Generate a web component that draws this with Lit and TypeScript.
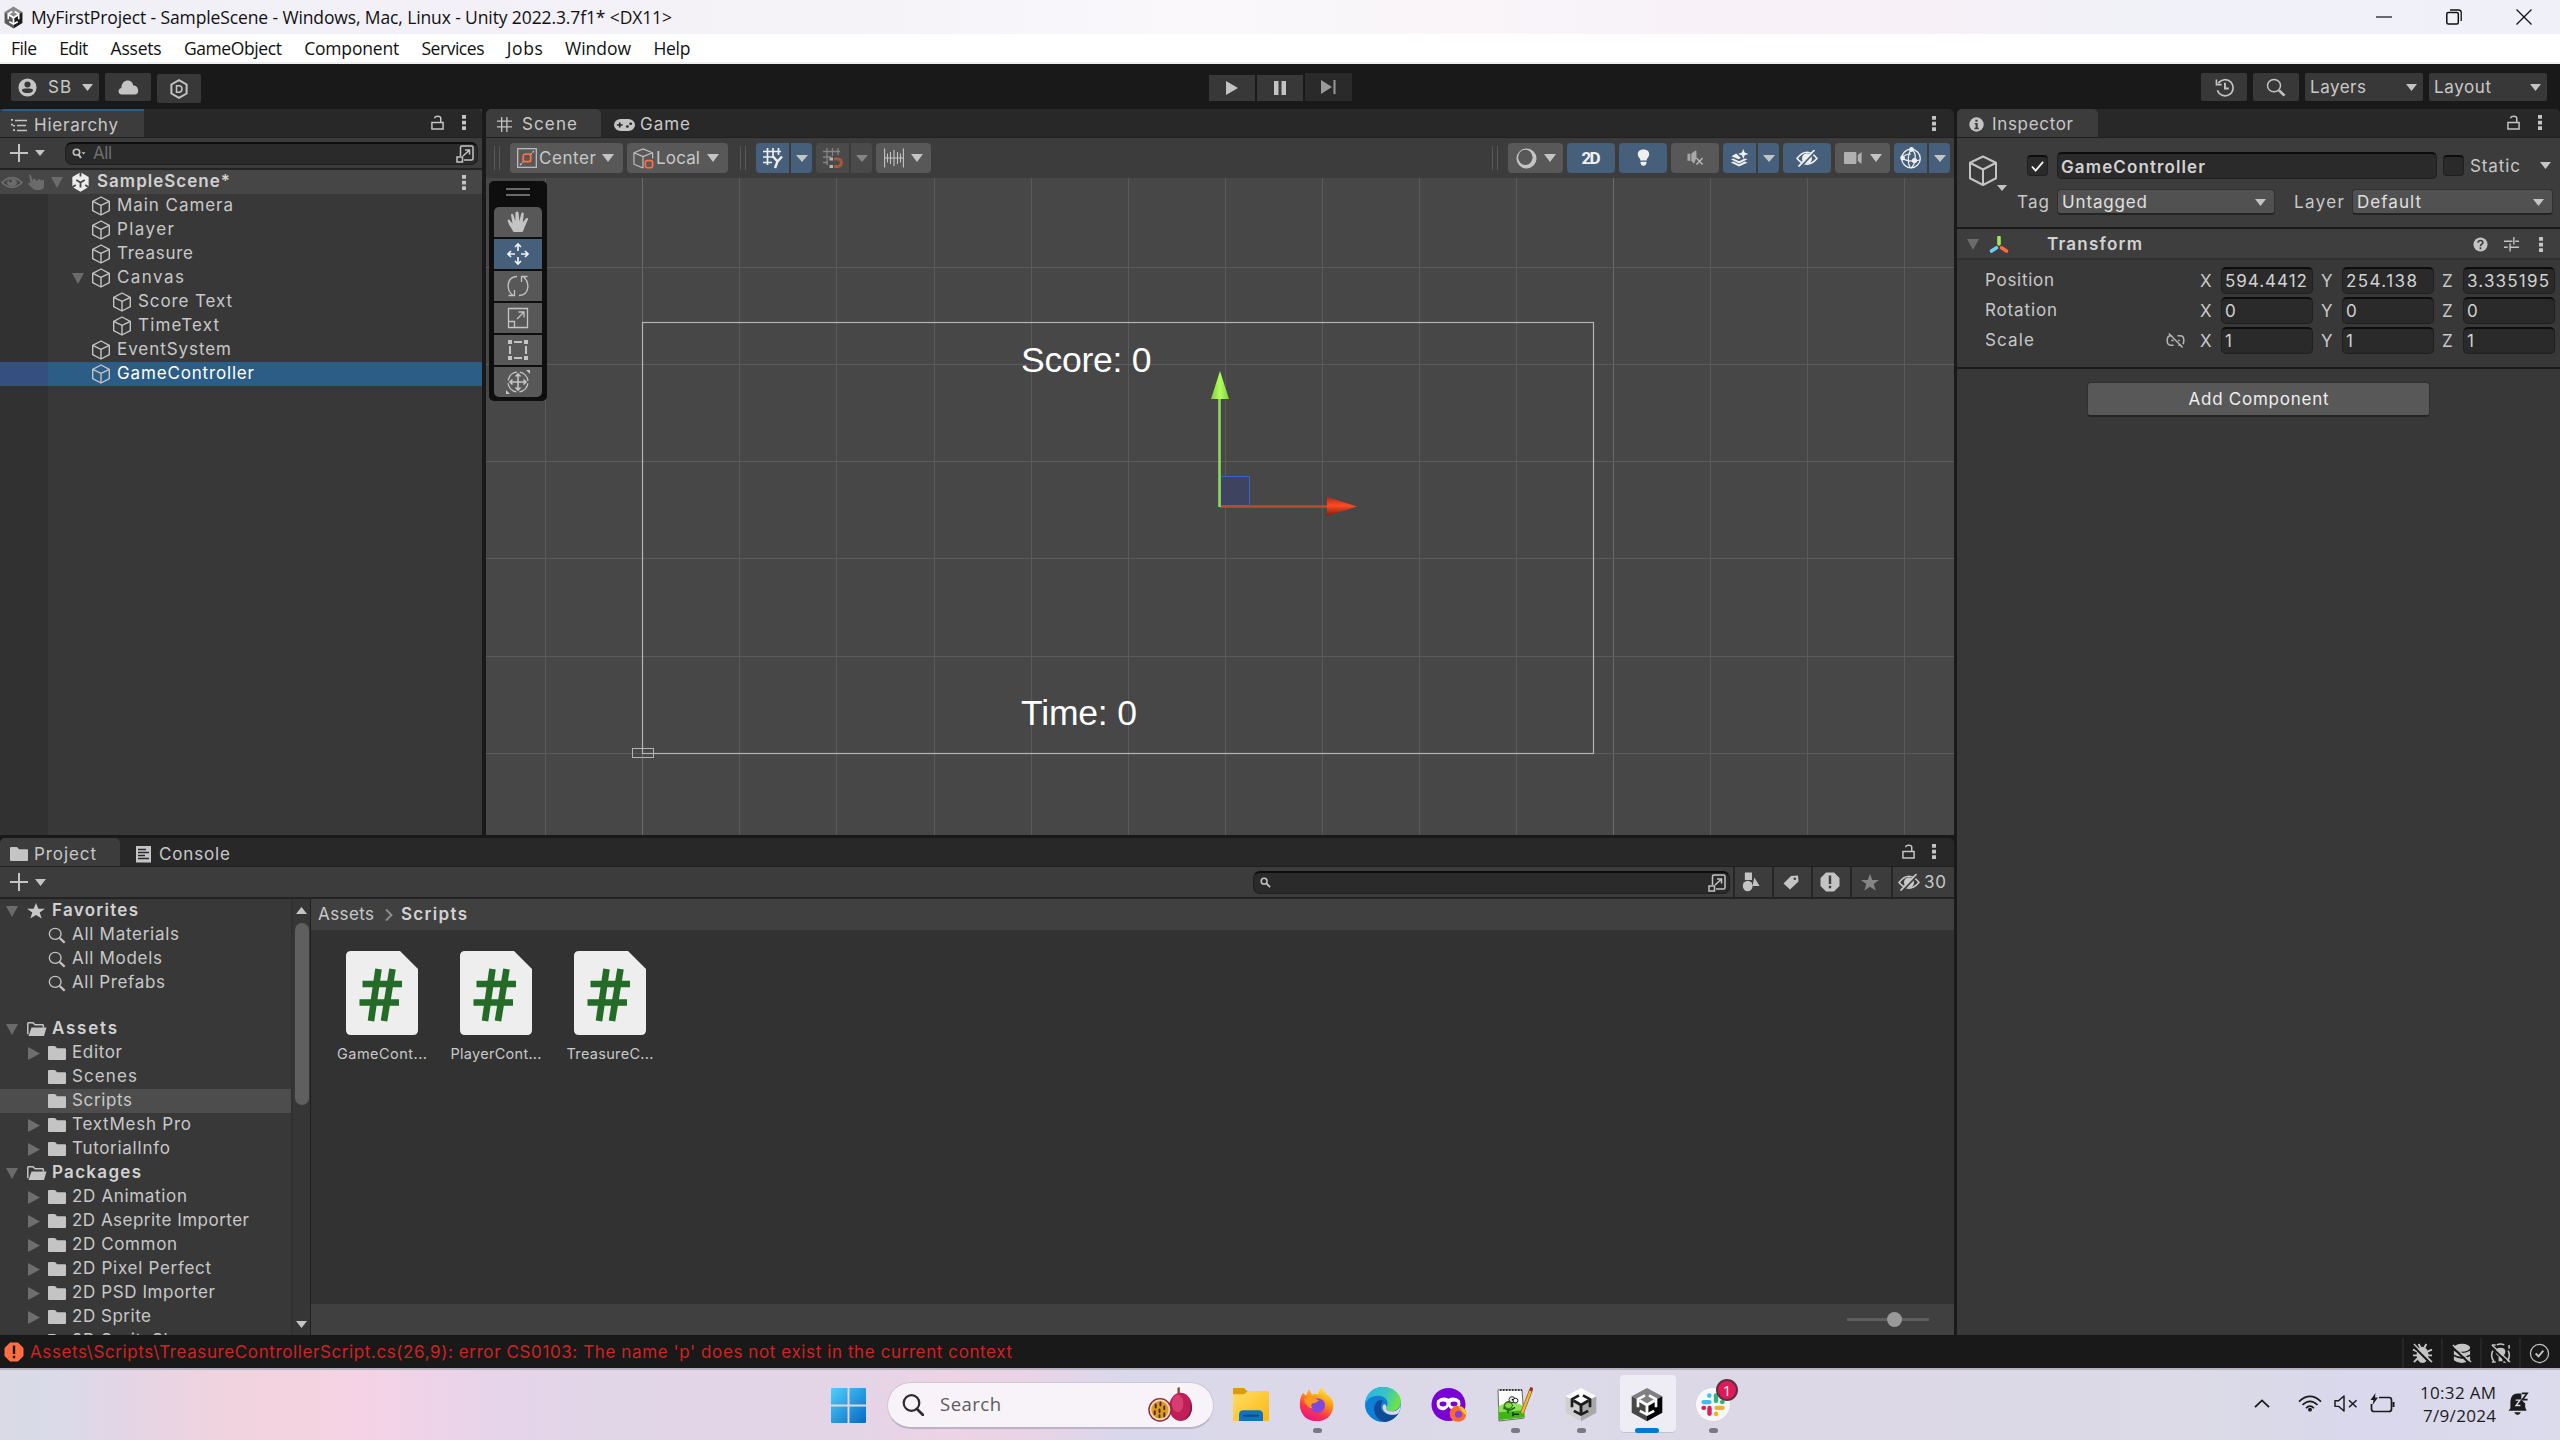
import { LitElement, html, svg, css, nothing } from "lit";
import { customElement, property, query } from "lit/decorators.js";
import { classMap } from "lit/directives/class-map.js";

/** A single line of text tracked out (or in) to a given advance width. */
@customElement("fit-text")
class FitText extends LitElement {
  @property({ type: Number }) w = 0;
  @property() text = "";
  @query("span") span!: HTMLSpanElement;
  static styles = css`
    :host { display: block; flex: none; white-space: pre; line-height: 1.2; }
    span { display: inline-block; }
  `;
  render() {
    return html`<span>${this.text}</span>`;
  }
  updated() {
    this.style.width = `${this.w}px`;
    this.span.style.letterSpacing = "0px";
    const natural = this.span.getBoundingClientRect().width;
    const n = Math.max(1, this.text.length - 1);
    if (this.text.length > 1) this.span.style.letterSpacing = `${(this.w - natural) / n}px`;
  }
}

const t = (text: string, w: number, cls = "") => html`<fit-text class=${cls} .text=${text} .w=${w}></fit-text>`;

const G = "#c4c4c4";

const unityMark = (top: string, left: string, right: string, ink: string) => svg`
  <path d="M20 1 37 10.5 20 20 3 10.5Z" fill=${top}/>
  <path d="M3 10.5 20 20V39L3 29.5Z" fill=${left}/>
  <path d="M37 10.5 20 20V39L37 29.5Z" fill=${right}/>
  <path d="M17.800 9.500 10 13.900V23M22.200 9.500 30 13.900V23M12 27.200 20 31.500 28 27.200" fill="none" stroke=${ink} stroke-width="3"/>
  <path d="M20 20.500V30M20 20.500 11.500 15.500M20 20.500 28.500 15.500" stroke=${ink} stroke-width="3.200"/>`;

const paths: Record<string, [string, unknown]> = {
  cube: ["0 0 20 20", svg`<path d="M10 1 18.300 5.300V14.700L10 19 1.700 14.700V5.300ZM1.700 5.300 10 9.400 18.300 5.300M10 9.400V19" fill="none" stroke=${G} stroke-width="1.400" stroke-linejoin="round"/>`],
  bigcube: ["0 0 30 30", svg`<path d="M15 1.500 28 7.500V22.500L15 29 2 22.500V7.500ZM2 7.500 15 14 28 7.500M15 14V29" fill="none" stroke=${G} stroke-width="2" stroke-linejoin="round"/>`],
  down: ["0 0 12 7", svg`<path d="M0 0H12L6 7Z" fill=${G}/>`],
  downdim: ["0 0 12 7", svg`<path d="M0 0H12L6 7Z" fill="#858585"/>`],
  open: ["0 0 12 12", svg`<path d="M0 0H12L6 12Z" fill="#6b6b6b"/>`],
  closed: ["0 0 12 12", svg`<path d="M0 0 12 6 0 12Z" fill="#6e6e6e"/>`],
  dots: ["0 0 4 16", svg`<path d="M0 0H4V4H0ZM0 6H4V10H0ZM0 12H4V16H0Z" fill=${G}/>`],
  lock: ["0 0 14 16", svg`<path d="M1 8H13V15H1ZM10.500 8V3.500C10.500 0.500 4 0.500 4 3.500" fill="none" stroke=${G} stroke-width="1.600"/>`],
  plus: ["0 0 18 18", svg`<path d="M9 0V18M0 9H18" stroke=${G} stroke-width="2"/>`],
  list: ["0 0 16 14", svg`<path d="M1 0V2M1 5V7M3 6.500V8M3 11V13" stroke=${G} stroke-width="2"/><path d="M4 1.500H16M6 7H15M6 12.500H16" stroke=${G} stroke-width="1.600"/>`],
  user: ["0 0 20 20", svg`<circle cx="10" cy="10" r="9.500" fill=${G}/><circle cx="10" cy="6.800" r="3.200" fill="#383838"/><path d="M4 12.500C5 10.500 15 10.500 16 12.500 15 17 5 17 4 12.500Z" fill="#383838"/>`],
  cloud: ["0 0 22 16" , svg`<path d="M4 15.500C-0.500 15.500-0.500 9 3.500 8.500 3.500 -1 15 -2 16 6 22 5.500 23 15.500 17.500 15.500Z" fill=${G}/>`],
  dhex: ["0 0 20 20", svg`<path d="M10 1.200 17.600 5.500V14.500L10 18.800 2.400 14.500V5.500Z" fill="none" stroke=${G} stroke-width="2"/><path d="M7.500 6.800H10C14 6.800 14 13.200 10 13.200H7.500Z" fill="none" stroke=${G} stroke-width="1.500"/>`],
  grid: ["0 0 18 18", svg`<path d="M6 1V17M11.500 1V17M1 5.500H17M1 11.500H17" stroke=${G} stroke-width="1.400"/>`],
  pad: ["0 0 22 14", svg`<rect width="22" height="14" rx="7" fill=${G}/><path d="M6 4V10M3 7H9" stroke="#282828" stroke-width="1.800"/><circle cx="14" cy="8.800" r="1.500" fill="#282828"/><circle cx="17.500" cy="5.500" r="1.500" fill="#282828"/>`],
  play: ["0 0 12 14", svg`<path d="M0 0 12 7 0 14Z" fill=${G}/>`],
  pause: ["0 0 12 14", svg`<path d="M0 0H4.500V14H0ZM7.500 0H12V14H7.500Z" fill=${G}/>`],
  step: ["0 0 15 14", svg`<path d="M0 0 11 7 0 14ZM12.500 0H14.500V14H12.500Z" fill="#9a9a9a"/>`],
  history: ["0 0 20 20", svg`<path d="M3.500 5.500A8.500 8.500 0 1 1 2.500 13" fill="none" stroke=${G} stroke-width="1.700"/><path d="M1.500 1.500V7H7" fill="none" stroke=${G} stroke-width="1.700"/><path d="M10.500 5V11H14.500" fill="none" stroke=${G} stroke-width="2"/>`],
  search: ["0 0 20 20", svg`<circle cx="8" cy="8" r="6.500" fill="none" stroke=${G} stroke-width="1.500"/><path d="M13 13 18.500 18.500" stroke=${G} stroke-width="2.600"/>`],
  minis: ["0 0 12 12", svg`<circle cx="4.500" cy="4.500" r="3.200" fill="none" stroke=${G} stroke-width="1.600"/><path d="M7 7 11 11" stroke=${G} stroke-width="2"/>`],
  minisd: ["0 0 14 12", svg`<circle cx="4.500" cy="4.500" r="3.200" fill="none" stroke=${G} stroke-width="1.600"/><path d="M6.500 7 9 11" stroke=${G} stroke-width="2"/><path d="M9.500 4.500H13.500L11.500 7Z" fill=${G}/>`],
  expand: ["0 0 18 18", svg`<path d="M4.500 11V2.500Q4.500 1 6 1H15.500Q17 1 17 2.500V13.500Q17 15 15.500 15H8" fill="none" stroke=${G} stroke-width="1.500"/><rect x="1" y="12" width="5.500" height="5" fill="none" stroke=${G} stroke-width="1.500"/><path d="M7 11 13 5.500M9 5H13.500V9.500" fill="none" stroke=${G} stroke-width="1.500"/>`],
  eyedim: ["0 0 22 16", svg`<path d="M1 8Q11-4 21 8 11 20 1 8Z" fill="none" stroke="#6b6b6b" stroke-width="2"/><circle cx="11" cy="8" r="5" fill="#6b6b6b"/><circle cx="9.500" cy="6" r="1.600" fill="#464646"/>`],
  handdim: ["0 0 18 18", svg`<path d="M2 0.500Q3.500 0 4.200 2L6 8V5H8.500V7H11V5.500H13.500V7H15.500V6H17V12Q17 16.500 13 17H8Q5 15 1 10.500 1 8.500 3.500 9.500Z" fill="#6b6b6b"/>`],
  unity: ["0 0 20 20", svg`<path d="M10 0.300 18.600 5V15L10 19.700 1.400 15V5Z" fill="#ececec"/><path d="M10 0V4.500M1 15.500 5 13M19 15.500 15 13M10 10.500V15.500M10 10.500 5.500 8M10 10.500 14.500 8" stroke="#464646" stroke-width="1.900"/>`],
  center: ["0 0 20 20", svg`<rect x="0.700" y="0.700" width="18.600" height="18.600" fill="none" stroke=${G} stroke-width="1.200"/><path d="M3 17 7 13M13 7 17 3" stroke=${G} stroke-width="1.200" stroke-dasharray="2.500 1"/><rect x="6.200" y="6.200" width="7.500" height="7.500" rx="2" fill="none" stroke="#ff6e40" stroke-width="1.800"/>`],
  local: ["0 0 22 22", svg`<path d="M20.500 11V5L10.500 1 1 5V17L10.500 21M1 5 10.500 9 20.500 5M10.500 9V21" fill="none" stroke=${G} stroke-width="1.200"/><rect x="13" y="13.200" width="7.500" height="7.500" rx="2" fill="none" stroke="#ff6e40" stroke-width="1.800"/>`],
  gridy: ["0 0 22 22", svg`<path d="M5.500 1V18M11 1V11M16.500 1V8M1 4.500H19M1 10H12M1 15.500H10" stroke="#eee" stroke-width="1.700"/><path d="M11 9.500 15.500 14.500 20 9.500M15.500 14.500 13 21" fill="none" stroke="#eee" stroke-width="2.400"/>`],
  snap: ["0 0 22 22", svg`<path d="M5 1V18M10.500 1V9M16 1V8M1 4.500H18M1 10H9M1 15.500H6" stroke="#858585" stroke-width="1.300"/><path d="M12 12H16C20.500 12 20.500 19.500 16 19.500H12" fill="none" stroke="#a8573c" stroke-width="3"/><path d="M7.500 10.500H11V13.500H7.500ZM7.500 18H11V21H7.500Z" fill="#b5b5b5"/>`],
  ruler: ["0 0 20 20", svg`<path d="M0.600 0.500V19.500M19.400 0.500V19.500M3.500 5.500V14.500M6.500 4V16M10 2V18M13.500 4V16M16.500 5.500V14.500M0 10H20" stroke=${G} stroke-width="1.100"/>`],
  hand: ["0 0 22 23", svg`<path d="M6.500 22Q4 17 2 14L0.500 10Q1.500 8 3 10L5.500 13 4 4Q5 2 6.300 4L8.300 10.500 8.500 1.500Q10.300-0.500 11.500 1.500L12.300 10.500 14.500 2Q16.500 1 16.800 3L15.800 12 19 7.500Q21.500 6.500 21 9L17.500 17Q16.500 21 15.500 22Z" fill=${G}/>`],
  move: ["0 0 22 22", svg`<path d="M11 1V8M11 21V14M1 11H8M21 11H14M8 4 11 1 14 4M8 18 11 21 14 18M4 8 1 11 4 14M18 8 21 11 18 14" fill="none" stroke="#f0f0f0" stroke-width="1.700"/>`],
  rotate: ["0 0 22 22", svg`<path d="M10 1.500C-1 2-1 15 6 20.500M1.500 20.500H7.500V15M12 20.500C23 20 23 7 16 1.500M20.500 1.500H14.500V7" fill="none" stroke=${G} stroke-width="1.300"/>`],
  scale: ["0 0 22 22", svg`<path d="M1.500 1.500H20.500V20.500H1.500ZM1.500 14.500H7.500V20.500M10 12 16.500 5.500M11.500 5H17V10.500" fill="none" stroke=${G} stroke-width="1.300"/>`],
  rect: ["0 0 22 22", svg`<path d="M1 1H5V5H1ZM17 1H21V5H17ZM1 17H5V21H1ZM17 17H21V21H17ZM7 2H15V4H7ZM7 18H15V20H7ZM2 7H4V15H2ZM18 7H20V15H18Z" fill=${G}/>`],
  multi: ["0 0 24 24", svg`<path d="M12 4V20M4 12H20M9.500 6.500 12 4 14.500 6.500M9.500 17.500 12 20 14.500 17.500M6.500 9.500 4 12 6.500 14.500M17.500 9.500 20 12 17.500 14.500" fill="none" stroke=${G} stroke-width="1.600"/><circle cx="12" cy="12" r="10" fill="none" stroke=${G} stroke-width="1.400" stroke-dasharray="12.700 3" stroke-dashoffset="-1.500"/><path d="M20 0H24V4ZM0 20V24H4Z" fill=${G}/>`],
  sphere: ["0 0 22 22", svg`<circle cx="11" cy="11" r="9.800" fill=${G} stroke=${G} stroke-width="1.400"/><ellipse cx="9.800" cy="9.800" rx="7.600" ry="8" fill="#585858"/>`],
  bulb: ["0 0 14 20", svg`<path d="M7 0.500C15 0.500 14 8 10.500 10.500V12H3.500V10.500C0 8-1 0.500 7 0.500ZM3.800 13.500H10.200V15Q9.500 18 7 18 4.500 18 3.800 15Z" fill="#efefef"/>`],
  audio: ["0 0 18 17", svg`<path d="M0.500 4H3.500V11.500H0.500ZM4.500 4 9 0.500 10 1V8L7.500 14.500 4.500 11.500Z" fill="#a8a8a8"/><path d="M10 8.500 16.500 15.500M16.500 8.500 10 15.500" stroke="#b5b5b5" stroke-width="1.600"/>`],
  fx: ["0 0 20 20", svg`<path d="M14 0 15.500 4 19.500 5.500 15.500 7 14 11 12.500 7 8.500 5.500 12.500 4ZM6.500 5 1.500 8 9 11.500 11.500 10M1 11.500 3.500 10.500 9.500 13.500 15.500 10.500 18.500 11.500 9.500 16ZM1 15 3.500 14 9.500 17 15.500 14 18.500 15 9.500 19.500Z" fill="#efefef"/>`],
  eyeoff: ["0 0 22 18", svg`<path d="M1 9Q11-4 21 9 11 21 1 9Z" fill="none" stroke="currentColor" stroke-width="1.600"/><ellipse cx="11" cy="9" rx="5" ry="5.500" fill="currentColor"/><path d="M4 18.500 20 0.500" stroke="var(--bg)" stroke-width="2"/><path d="M2.500 17.500 18.500 0" stroke="currentColor" stroke-width="1.800"/>`],
  camera: ["0 0 20 14", svg`<rect y="1" width="13" height="12" rx="1" fill="#b0b0b0"/><path d="M14.500 4 18.500 1V13L14.500 10Z" fill="#b0b0b0"/>`],
  gizmo: ["0 0 22 22", svg`<circle cx="11" cy="11.500" r="9.300" fill="none" stroke="#efefef" stroke-width="1.300"/><path d="M11 2Q6 11 10 21M2 11Q9 16 20 13M11 2Q16.500 5 15 13 14.500 18 11 21M2 11Q5 7 11 7" fill="none" stroke="#efefef" stroke-width="1.200"/><circle cx="11.500" cy="2.500" r="2.400" fill="#efefef"/><circle cx="2.600" cy="11" r="2.400" fill="#efefef"/><circle cx="14.500" cy="13.500" r="2.600" fill="#efefef"/>`],
  info: ["0 0 16 16", svg`<circle cx="8" cy="8" r="7.700" fill=${G}/><path d="M6.800 2.800H9.200V5H6.800ZM6 6.300H9.300V11.500H10.500V13H5.800V11.500H7V7.800H6Z" fill="#3c3c3c"/>`],
  check: ["0 0 14 12", svg`<path d="M1 6 5 10.500 13 1" fill="none" stroke="#f0f0f0" stroke-width="2"/>`],
  axes: ["0 0 20 18", svg`<path d="M10 1.500V8" stroke="#a4e85a" stroke-width="3.600" stroke-linecap="round"/><path d="M7.500 11.800 2.500 15" stroke="#6ccdf5" stroke-width="3.600" stroke-linecap="round"/><path d="M12.500 11.800 17.500 15" stroke="#ff6a3d" stroke-width="3.600" stroke-linecap="round"/>`],
  help: ["0 0 16 16", svg`<circle cx="8" cy="8" r="7.500" fill=${G}/><path d="M5.500 6C5.500 3 10.500 3 10.500 6 10.500 7.500 8 8 8 9.800M8 11V13" fill="none" stroke="#3c3c3c" stroke-width="1.800"/>`],
  preset: ["0 0 16 16", svg`<path d="M0 4.500H9M12 4.500H16M10.500 0V8M0 11H4M7 11H16M6.500 7V15.500" stroke=${G} stroke-width="1.500"/>`],
  unlink: ["0 0 20 16", svg`<path d="M7 3H5C0 3 0 13 5 13H8M12 3H15C20 3 20 13 15 13H13" fill="none" stroke="#b4b4b4" stroke-width="1.600"/><path d="M5 0 18.500 14" stroke="#383838" stroke-width="1.600"/><path d="M3 0.500 17.500 15.500" stroke="#b4b4b4" stroke-width="1.500"/><path d="M5.500 8H8M12.500 8H14.500" stroke="#b4b4b4" stroke-width="1.500"/>`],
  folder: ["0 0 18 15", svg`<path d="M0 1Q0 0 1 0H6.500Q7.300 0 8 1L9 2.500H17Q18 2.500 18 3.500V14Q18 15 17 15H1Q0 15 0 14Z" fill=${G}/>`],
  fopen: ["0 0 20 15", svg`<path d="M0.800 13V1.500Q0.800 0.800 1.500 0.800H6L8 3H15.500Q16.300 3 16.300 3.700V6" fill="none" stroke=${G} stroke-width="1.500"/><path d="M4.500 6H19.500L17 15H1.500Z" fill=${G}/>`],
  star: ["0 0 18 17", svg`<path d="M9 0 11.300 6H18L12.700 10 14.700 16.500 9 12.700 3.300 16.500 5.300 10 0 6H6.700Z" fill="currentColor"/>`],
  console: ["0 0 16 17", svg`<rect width="15" height="16.500" fill=${G}/><path d="M2 3.500H10M2 6.500H13M2 9.500H9M2 12.500H13" stroke="#282828" stroke-width="1.400"/>`],
  up: ["0 0 11 7", svg`<path d="M0 7H11L5.500 0Z" fill=${G}/>`],
  crumb: ["0 0 8 12", svg`<path d="M1 0.500 6.500 6 1 11.500" fill="none" stroke="#8c8c8c" stroke-width="2"/>`],
  script: ["0 0 72 84", svg`<path d="M0 5Q0 0 5 0H54L72 18V79Q72 84 67 84H5Q0 84 0 79Z" fill="#eee"/><path d="M32.500 18 25 70M46.500 18 38 70M16.500 33H56M13.500 51.500H53" stroke="#256b28" stroke-width="6.600"/>`],
  shapes: ["0 0 20 20", svg`<path d="M3 0.500H10.500V8H3ZM13 5.500 18.500 14H11Z" fill=${G}/><circle cx="6" cy="14" r="5.200" fill=${G}/>`],
  tag: ["0 0 16 16", svg`<path d="M8 1 15 0.500 15.500 7 7 15.500 0.500 9Z" fill=${G}/><circle cx="11.800" cy="4" r="1.300" fill="#3c3c3c"/>`],
  alert: ["0 0 20 20", svg`<path d="M6 0.500H14L19.500 6V14L14 19.500H6L0.500 14V6Z" fill=${G}/><path d="M10 3.500V12M10 13.800V16.300" stroke="#3c3c3c" stroke-width="2.400"/>`],
  error: ["0 0 20 20", svg`<path d="M6 0.500H14L19.500 6V14L14 19.500H6L0.500 14V6Z" fill="#ff6e40"/><path d="M10 3.500V12M10 13.800V16.300" stroke="#191919" stroke-width="2.400"/>`],
  bug: ["0 0 22 22", svg`<ellipse cx="11" cy="12.500" rx="6.200" ry="8.500" fill=${G}/><path d="M7 1 9 5M15 1 13 5M1 7 6 9M21 7 16 9M1 13H21M2 20 6 16M20 20 16 16" stroke=${G} stroke-width="2"/><path d="M1 3 20 22" stroke="#191919" stroke-width="2.200"/><path d="M2 1 21 20" stroke=${G} stroke-width="1.500"/>`],
  stack: ["0 0 22 22", svg`<ellipse cx="11.500" cy="5" rx="8.500" ry="4.200" fill=${G}/><path d="M3 8Q11 13 20 8V12Q11 17 3 12ZM3 14Q11 19 20 14V18Q11 24 3 18Z" fill=${G}/><path d="M1 4 20 22" stroke="#191919" stroke-width="2.200"/><path d="M2 2 21 20" stroke=${G} stroke-width="1.500"/>`],
  lightoff: ["0 0 22 22", svg`<path d="M7 2Q11 0 15 2M3 8Q0 14 4 19M19 8Q22 14 18 19M2 2H6M20 2V6M2 20H6M14 20H19V16" fill="none" stroke=${G} stroke-width="1.600"/><path d="M11 5C18 5 17 12 13 14V19H9V14C5 12 4 5 11 5Z" fill=${G}/><path d="M1 4 20 22" stroke="#191919" stroke-width="2.200"/><path d="M2 2 21 20" stroke=${G} stroke-width="1.500"/>`],
  okring: ["0 0 22 22", svg`<circle cx="11" cy="11" r="9.500" fill="none" stroke=${G} stroke-width="1.300"/><path d="M7 11 10 14 15 8" fill="none" stroke=${G} stroke-width="2"/>`],
  appdark: ["0 0 40 40", unityMark("#8a8a8a", "#5a5a5a", "#1c1c1c", "#fff")],
  applight: ["0 0 40 40", unityMark("#ffffff", "#cfcfcf", "#a8a8a8", "#1d1d1d")],
  appactive: ["0 0 40 40", unityMark("#808080", "#474747", "#050505", "#fafafa")],
  min: ["0 0 16 16", svg`<path d="M0 8H16" stroke="#111" stroke-width="1.200"/>`],
  restore: ["0 0 16 16", svg`<rect x="0.800" y="3.500" width="11.500" height="11.500" rx="1.500" fill="none" stroke="#111" stroke-width="1.500"/><path d="M4 1H12.500Q15.200 1 15.200 3.500V12" fill="none" stroke="#111" stroke-width="1.300"/>`],
  close: ["0 0 16 16", svg`<path d="M0.500 0.500 15.500 15.500M15.500 0.500 0.500 15.500" stroke="#111" stroke-width="1.300"/>`],
  windows: ["0 0 36 36", svg`<defs><linearGradient id="wg" x2="1" y2="1"><stop stop-color="#4fd0fb"/><stop offset="1" stop-color="#0669c4"/></linearGradient></defs><path d="M1 0H17V17H0V1Q0 0 1 0ZM19 0H35Q36 0 36 1V17H19ZM0 19H17V36H1Q0 36 0 35ZM19 19H36V35Q36 36 35 36H19Z" fill="url(#wg)"/>`],
  find: ["0 0 22 22", svg`<circle cx="9.500" cy="9" r="7.800" fill="none" stroke="#2b2b2b" stroke-width="2.200"/><path d="M15 15 21 21" stroke="#2b2b2b" stroke-width="2.600" stroke-linecap="round"/>`],
  fruit: ["0 0 48 36", svg`<path d="M32 0.500V8" stroke="#8a4a22" stroke-width="2.500"/><ellipse cx="34" cy="20.500" rx="12" ry="14.500" fill="#bf1f56"/><ellipse cx="31" cy="17" rx="6" ry="9" fill="#e04b7d" opacity=".7"/><path d="M43 12Q48 24 38 34 46 30 46 20Z" fill="#7d1746"/><circle cx="12.500" cy="23.500" r="12.200" fill="#8e2441"/><circle cx="12.500" cy="23.500" r="10.800" fill="#f3d9b0"/><circle cx="12.500" cy="23.500" r="9" fill="#dd9a25"/><path d="M8 18v3M13 16v3M17 20v3M7 25v3M12 23v3M12 29v2M17 27v3" stroke="#4a2c12" stroke-width="2" stroke-linecap="round"/>`],
  explorer: ["0 0 36 34", svg`<defs><linearGradient id="ex" x2="1" y2="1"><stop stop-color="#ffdd66"/><stop offset="1" stop-color="#fbb812"/></linearGradient></defs><path d="M0 2Q0 1 1 1H11L15 4.500 12 8H0Z" fill="#dd9b0b"/><path d="M0 7H11L15 4H35Q36 4 36 5V32Q36 33 35 33H1Q0 33 0 32Z" fill="url(#ex)"/><path d="M6 33V27Q6 22.500 10 22.500H26Q30 22.500 30 27V33Z" fill="#1273bd"/><path d="M11 28H25" stroke="#0b4d86" stroke-width="2" stroke-linecap="round"/>`],
  firefox: ["0 0 36 36", svg`<defs><linearGradient id="ff" x1=".8" x2=".3" y2="1"><stop stop-color="#fff44f"/><stop offset=".4" stop-color="#ff980e"/><stop offset=".7" stop-color="#ff3647"/><stop offset="1" stop-color="#e31587"/></linearGradient></defs><path d="M4 6 7 9 10 2 13 8Q17 6 19 8 20 2 23 0 25 6 30 9 36 15 34 22 31 35 18 35 4 35 1 21 0 12 4 6Z" fill="url(#ff)"/><circle cx="18.500" cy="19" r="7.500" fill="#8046e0"/><path d="M5 13Q10 8 15 11L20 14Q17 17 13 17 11 20 14 22 8 22 5 13Z" fill="#ff9a1f"/>`],
  edge: ["0 0 36 36", svg`<defs><linearGradient id="eg" x2="1" y2=".3"><stop stop-color="#2bb3e8"/><stop offset=".6" stop-color="#35c6c0"/><stop offset="1" stop-color="#6fe04d"/></linearGradient></defs><circle cx="18" cy="18" r="18" fill="#0e7fd6"/><path d="M0 18C1 6 9 0 18 0 29 0 36 8 36 15 36 22 30 25 26 25 22 25 21 23 21.500 21 25 14 19 8 12 9 6 9 2 13 0 18Z" fill="url(#eg)"/><path d="M12 15C6 22 10 34 20 36 27 35 31 31 33.500 27 27 31 18 28 16 22 15.500 19 16.500 16 18 14 15 13 13 14 12 15Z" fill="#114a94"/><path d="M21.500 21C20.500 23 23 25.500 27 25 31 25 34.500 23 36 18Q36 22 33.500 27C27 31 18 27 17.500 21 17.500 17 21 16 21.500 21Z" fill="#d9d7e8"/>`],
  mask: ["0 0 36 36", svg`<circle cx="17.500" cy="18" r="17" fill="#7b00d4"/><path d="M6 14Q11 9 17.500 12 24 9 29 14 31 23 24 24 20 24 17.500 20 15 24 11 24 4 23 6 14Z" fill="#fff"/><ellipse cx="12" cy="17.500" rx="3.500" ry="2.500" fill="#7b00d4"/><ellipse cx="23" cy="17.500" rx="3.500" ry="2.500" fill="#7b00d4"/><circle cx="27" cy="27.500" r="8.300" fill="#fd6a2c"/><path d="M27 19.500Q36 21 35 29L31 25Z" fill="#ffc52e"/><circle cx="27.500" cy="28" r="3.600" fill="#8b3fd0"/>`],
  notepad: ["0 0 36 36", svg`<path d="M1 3H25L27 32 2 35Z" fill="#fdfdfd" stroke="#666" stroke-width="1"/><path d="M1.500 20Q14 12 27 20L27.500 31 2 34Z" fill="#8fe05a"/><path d="M1.800 26 27 24 27.500 31 2 34Z" fill="#3db512"/><path d="M3 3H25" stroke="#333" stroke-width="2" stroke-dasharray="1.500 1.500"/><path d="M7 23Q7 14 14 15M8 22Q12 26 18 21M11 24V27" fill="none" stroke="#1f6b12" stroke-width="1.600"/><ellipse cx="11.500" cy="19" rx="4" ry="3.200" fill="#82dd3f" stroke="#1f6b12"/><circle cx="15" cy="13" r="3" fill="#fff" stroke="#222"/><circle cx="18.500" cy="14" r="2.400" fill="#fff" stroke="#222"/><circle cx="15.500" cy="13" r="1" fill="#111"/><path d="M34 3 25 27" stroke="#7a4a10" stroke-width="3.600"/><path d="M34 3 25 27" stroke="#f7b82f" stroke-width="2.400"/><path d="M35 0.500 33.500 4" stroke="#9c2b2b" stroke-width="3.200"/><path d="M16 28H22M16 26V30" stroke="#222" stroke-width="1.500"/>`],
  slack: ["0 0 36 36", svg`<circle cx="18" cy="18" r="17.500" fill="#f8f8f8" stroke="#d6d3dc"/><g fill="none" stroke-width="4.400" stroke-linecap="round"><path d="M8.500 15.500H14.500" stroke="#36c5f0"/><path d="M14.300 8.500V9" stroke="#36c5f0"/><path d="M21 8.500V14.500" stroke="#2eb67d"/><path d="M27 15.500H27.500" stroke="#2eb67d"/><path d="M21.500 21.500H27.500" stroke="#ecb22e"/><path d="M21 27.500V28" stroke="#ecb22e"/><path d="M14.500 21.500V27.500" stroke="#e01e5a"/><path d="M8.500 21.500H9" stroke="#e01e5a"/></g>`],
  caret: ["0 0 16 10", svg`<path d="M1 9 8 1.500 15 9" fill="none" stroke="#1b1b1b" stroke-width="1.800"/>`],
  wifi: ["0 0 24 18", svg`<path d="M1 7Q12-4 23 7M4.500 10.500Q12 3 19.500 10.500M8 14Q12 9.500 16 14" fill="none" stroke="#1b1b1b" stroke-width="1.700"/><circle cx="12" cy="15.500" r="2" fill="#1b1b1b"/>`],
  mute: ["0 0 24 18", svg`<path d="M1 6H4.500L10 1V17L4.500 12H1Z" fill="none" stroke="#1b1b1b" stroke-width="1.500" stroke-linejoin="round"/><path d="M15 5.500 22.500 13M22.500 5.500 15 13" stroke="#1b1b1b" stroke-width="1.500"/>`],
  battery: ["0 0 25 20", svg`<path d="M9 4.500H19Q21.500 4.500 21.500 7V16Q21.500 18.500 19 18.500H4Q1.500 18.500 1.500 16V11" fill="none" stroke="#1b1b1b" stroke-width="1.700"/><path d="M22.500 9H24.500V14H22.500ZM5.500 0 0.500 7H3.500L2.500 12 8 4.500H5Z" fill="#1b1b1b"/>`],
  bell: ["0 0 22 24", svg`<path d="M2.500 17V10Q3 1.500 10 1.500H14V8L18 12V16L19.500 19.500H0.500Z" fill="#1b1b1b"/><path d="M6.500 21H13.500Q12 24 10 24 8 24 6.500 21Z" fill="#1b1b1b"/><path d="M8 8.500H12.500L8.500 14H13" stroke="#dadaec" stroke-width="1.500" fill="none"/><path d="M14.500 1.500H20L15 8H20.500" fill="none" stroke="#1b1b1b" stroke-width="1.700"/>`],
};

const icon = (name: string, w: number, h: number, cls = "") =>
  html`<svg class=${"ic " + cls} width=${w} height=${h} viewBox=${paths[name][0]} preserveAspectRatio="none">${paths[name][1]}</svg>`;

interface Node { name: string; w: number; depth: number; open?: boolean; selected?: boolean }
const hierarchy: Node[] = [
  { name: "Main Camera", w: 116, depth: 0 },
  { name: "Player", w: 57, depth: 0 },
  { name: "Treasure", w: 76, depth: 0 },
  { name: "Canvas", w: 67, depth: 0, open: true },
  { name: "Score Text", w: 94, depth: 1 },
  { name: "TimeText", w: 81, depth: 1 },
  { name: "EventSystem", w: 114, depth: 0 },
  { name: "GameController", w: 137, depth: 0, selected: true },
];

interface Item { name: string; w: number; kind: "star" | "find" | "root" | "folder" | "gap"; arrow?: boolean; selected?: boolean }
const f = (name: string, w: number, arrow = true, selected = false): Item => ({ name, w, kind: "folder", arrow, selected });
const projectTree: Item[] = [
  { name: "Favorites", w: 86, kind: "star" },
  { name: "All Materials", w: 107, kind: "find" },
  { name: "All Models", w: 90, kind: "find" },
  { name: "All Prefabs", w: 93, kind: "find" },
  { name: "", w: 0, kind: "gap" },
  { name: "Assets", w: 65, kind: "root" },
  f("Editor", 50), f("Scenes", 65, false), f("Scripts", 60, false, true), f("TextMesh Pro", 119), f("TutorialInfo", 98),
  { name: "Packages", w: 89, kind: "root" },
  f("2D Animation", 115), f("2D Aseprite Importer", 177), f("2D Common", 105), f("2D Pixel Perfect", 139),
  f("2D PSD Importer", 143), f("2D Sprite", 79), f("2D SpriteShape", 133),
];

const menus: [string, number][] = [["File", 26], ["Edit", 29], ["Assets", 51], ["GameObject", 98], ["Component", 95], ["Services", 63], ["Jobs", 36], ["Window", 66], ["Help", 37]];

@customElement("app-root")
class AppRoot extends LitElement {
  static styles = css`
    :host { display: flex; flex-direction: column; width: 2560px; height: 1440px; overflow: hidden; background: #191919; font: 17px Inter, "Liberation Sans", sans-serif; color: #c8c8c8; --bg: #3c3c3c; }
    * { box-sizing: border-box; }
    .ic { display: block; flex: none; }
    .row { display: flex; align-items: center; }
    .grow { flex: 1; }
    .b { font-weight: 600; color: #d2d2d2; }
    .title { height: 34px; padding: 0 28px 0 3px; background: linear-gradient(90deg, #f1f0f7 0, #f4f1f7 700px, #faf8fb 1200px, #f7f0f6 1900px, #f1f1f8 2120px, #f0f1f8); font: 17.5px "Open Sans", sans-serif; color: #111; }
    .title .name { margin-left: 7px; margin-top: 1px; }
    .win { gap: 54px; padding-bottom: 1px; }
    .menu { height: 30px; padding: 1px 11px 0; gap: 22px; background: #fff; border-bottom: 2px solid #f0f0f0; font: 17.5px "Open Sans", sans-serif; color: #111; }
    .menu > * { margin-right: .3px; }
    .bar { height: 45px; flex: none; align-items: flex-start; padding: 9px 13px 0 11px; }
    .tb { display: flex; align-items: center; justify-content: center; height: 28px; background: #383838; border-radius: 2px; }
    .tb.user { width: 88px; gap: 11px; padding-left: 1px; }
    .tb.cloud { width: 46px; margin-left: 6px; }
    .tb.dev { width: 44px; height: 29px; margin: 1px 0 0 6px; }
    .transport { margin-left: 1008px; gap: 2px; padding-top: 1px; }
    .transport .tb { width: 46px; height: 26px; border-radius: 0; }
    .transport .off { background: #2a2a2a; width: 47px; height: 28px; margin-top: -1px; }
    .tools-r { margin-left: 849px; gap: 6px; }
    .tools-r .sq { width: 46px; }
    .tools-r .dd { width: 118px; padding: 0 6px 0 5px; justify-content: space-between; }
    .main { display: flex; height: 1226px; gap: 3px; }
    .left { width: 1954px; display: flex; flex-direction: column; gap: 3px; }
    .upper { display: flex; height: 726px; gap: 4px; }
    .tabs { height: 29px; flex: none; background: #282828; border-bottom: 1px solid #202020; align-items: stretch; border-radius: 5px 5px 0 0; overflow: hidden; }
    .tab { display: flex; align-items: center; height: 29px; padding-top: 2px; }
    .tab.on { background: #3c3c3c; }
    .hier { width: 482px; display: flex; flex-direction: column; background: #383838; }
    .tab.h { width: 144px; padding-left: 11px; gap: 7px; border-top: 2px solid #2c5d87; padding-top: 1px; }
    .tabend { display: flex; align-items: center; gap: 18px; margin-left: auto; }
    .hier .tabend { padding-right: 16px; padding-bottom: 1px; }
    .hbar { height: 32px; background: #3c3c3c; border-bottom: 2px solid #232323; padding-left: 10px; }
    .hbar .ic.d { margin-left: 7px; }
    .field { background: #2a2a2a; border: 1px solid #1f1f1f; border-top: 2px solid #0d0d0d; border-radius: 5px; }
    .search { display: flex; align-items: center; width: 413px; height: 23px; margin-left: 20px; padding: 0 3px 0 6px; border-radius: 7px; }
    .ph { color: #6f6f6f; margin-left: 7px; }
    .tree { flex: 1; background: linear-gradient(90deg, #313131 48px, #383838 48px); }
    .hrow { display: flex; align-items: center; height: 24px; }
    .hrow fit-text, .prow fit-text { margin-bottom: 2px; }
    .hrow.scene { background: #464646; padding-right: 16px; padding-left: 1px; }
    .hrow.sel { background: linear-gradient(90deg, #355080 48px, #2c5d87 48px); color: #fff; }
    .hrow .slot { width: 91px; padding-right: 6px; display: flex; justify-content: flex-end; }
    .hrow .slot.d1 { width: 112px; }
    .hrow .slot .ic { margin-right: 1px; }
    .hrow .cube { margin-right: 6px; }
    .scene-pane { width: 1468px; display: flex; flex-direction: column; }
    .tab.s { width: 115px; padding-left: 10px; gap: 9px; border-radius: 5px 5px 0 0; }
    .tab.g { padding-left: 13px; gap: 5px; }
    .scene-pane .tabend { padding-right: 18px; }
    .sbar { height: 40px; flex: none; background: #3c3c3c; padding: 0 4px 0 8px; }
    .grip { width: 6px; height: 24px; border: solid #585858; border-width: 0 1.5px; flex: none; }
    .btn { display: flex; align-items: center; justify-content: center; height: 30px; background: #585858; border-radius: 4px; flex: none; }
    .btn.on { background: #46607c; color: #f0f0f0; --bg: #46607c; }
    .btn.off { background: #4a4a4a; }
    .btn.l { border-radius: 4px 0 0 4px; }
    .btn.r { border-radius: 0 4px 4px 0; margin-left: 2px; width: 21px; }
    .btn.center { width: 113px; margin-left: 10px; gap: 2px; padding-left: 7px; justify-content: flex-start; }
    .btn.center .ic:last-child { margin-left: 4px; }
    .btn.local { width: 101px; margin-left: 4px; gap: 2px; padding-left: 6px; justify-content: flex-start; }
    .btn.local .ic:last-child { margin-left: 5px; }
    .g12 { margin-left: 12px; }
    .g10 { margin-left: 10px; }
    .g4 { margin-left: 4px; }
    .w33 { width: 33px; }
    .w48 { width: 48px; }
    .w55 { width: 55px; gap: 7px; }
    .twod { font: 700 17px Roboto, Inter, sans-serif; }
    .view { position: relative; flex: 1; background: #474747; overflow: hidden; }
    .view > svg { display: block; }
    .txt { font: 35.5px "Liberation Sans", Arial, sans-serif; fill: #fff; }
    .palette { position: absolute; left: 3px; top: 3px; width: 58px; height: 220px; border-radius: 5px; background: #0e0e0e; display: flex; flex-direction: column; align-items: center; gap: 2px; }
    .handle { width: 24px; height: 8px; border: solid #6a6a6a; border-width: 2px 0; margin: 7px 0 9px; flex: none; }
    .palette .btn { width: 48px; border-radius: 0; }
    .palette .first { border-radius: 5px 5px 0 0; }
    .palette .last { border-radius: 0 0 5px 5px; }
    .project { height: 497px; display: flex; flex-direction: column; }
    .tab.p { width: 120px; padding-left: 10px; gap: 6px; border-radius: 0 5px 0 0; padding-top: 3px; }
    .tab.c { padding-left: 16px; gap: 7px; padding-top: 3px; }
    .project .tabend { padding-right: 18px; padding-bottom: 1px; gap: 17px; }
    .pbar { height: 32px; flex: none; background: #3c3c3c; border-bottom: 2px solid #232323; padding-left: 10px; }
    .pbar .d { margin-left: 7px; }
    .pbar .search { width: 477px; margin-left: 1207px; padding-right: 3px; }
    .seg { display: flex; align-items: center; justify-content: center; height: 30px; width: 39px; border-left: 2px solid #262626; padding-right: 4px; }
    .seg.dim { width: 41px; color: #858585; padding-right: 3px; }
    .seg.cnt { width: 63px; gap: 4px; padding-right: 3px; }
    .pbody { display: flex; height: 436px; }
    .ptree { width: 291px; background: #383838; overflow: hidden; }
    .prow { display: flex; align-items: center; height: 24px; padding-left: 6px; }
    .pgap { height: 22px; }
    .prow.sel { background: #4d4d4d; }
    .pa { width: 21px; flex: none; }
    .pa.deep { width: 42px; padding-left: 22px; }
    .pi { width: 25px; flex: none; display: flex; }
    .deep + .pi { width: 24px; }
    .scroll { width: 20px; background: #363636; border-left: 2px solid #313131; border-right: 1px solid #202020; display: flex; flex-direction: column; align-items: center; padding: 8px 0 7px; }
    .thumb { width: 14px; height: 182px; border-radius: 7px; background: #5f5f5f; margin: 9px 0 auto; }
    .content { width: 1643px; display: flex; flex-direction: column; background: #323232; }
    .crumbs { height: 31px; background: #404040; padding-left: 7px; gap: 10px; }
    .crumbs .d { margin: 0 -2px 0 1px; }
    .files { flex: 1; display: flex; padding: 21px 0 0 14px; }
    .file { width: 114px; display: flex; flex-direction: column; align-items: center; gap: 10px; font-size: 14.5px; }
    .foot { height: 31px; background: #404040; justify-content: flex-end; padding-right: 25px; }
    .slider { width: 82px; height: 3px; background: #5e5e5e; position: relative; }
    .knob { position: absolute; left: 40px; top: -6px; width: 15px; height: 15px; border-radius: 8px; background: #999; }
    .insp { width: 603px; background: #383838; display: flex; flex-direction: column; border-radius: 5px 5px 0 0; }
    .tab.i { width: 141px; padding-left: 12px; gap: 8px; border-radius: 5px 5px 0 0; }
    .insp .tabend { padding-right: 18px; padding-bottom: 2px; }
    .head { height: 91px; background: #3c3c3c; border-bottom: 2px solid #1a1a1a; display: flex; padding: 17px 0 0 11px; }
    .obj { width: 59px; display: flex; }
    .obj .d { margin: 30px 0 0 -1px; }
    .hmain { flex: 1; }
    .l1 { display: flex; align-items: center; height: 27px; margin-top: -3px; }
    .chk { width: 21px; height: 21px; border-radius: 4px; display: flex; align-items: center; justify-content: center; }
    .nm { width: 380px; height: 27px; display: flex; align-items: center; padding-left: 3px; margin: 0 6px 0 9px; padding-top: 3px; }
    .l1 .st { margin: 1px 20px 0 6px; }
    .l2 { display: flex; align-items: center; height: 26px; margin-top: 10px; }
    .pop { display: flex; align-items: center; justify-content: space-between; height: 26px; background: #515151; border: 1px solid #303030; border-bottom: 2px solid #242424; border-radius: 4px; padding: 1px 8px 0 4px; color: #e0e0e0; }
    .l2 .first { margin-left: -10px; }
    .comp { height: 31px; background: #3e3e3e; border-bottom: 2px solid #303030; padding: 2px 17px 0 10px; }
    .vecs { height: 109px; border-bottom: 2px solid #1a1a1a; padding: 7px 3px 0 28px; display: flex; flex-direction: column; gap: 3px; }
    .vec { display: flex; align-items: center; height: 27px; }
    .vec .lab { width: 181px; }
    .vec .lk { width: 34px; }
    .vec .ax { width: 21px; }
    .num { width: 92px; height: 27px; padding: 1px 0 0 3px; margin-right: 8px; display: flex; align-items: center; overflow: hidden; color: #d2d2d2; flex: none; }
    .num:last-child { margin: 0; }
    .add { width: 343px; height: 35px; margin: 13px 0 0 130px; background: #585858; border: 1px solid #303030; border-bottom: 2px solid #242424; border-radius: 4px; display: flex; align-items: center; justify-content: center; color: #eee; }
    .status { height: 33px; padding-left: 4px; gap: 6px; color: #d32222; background: #191919; }
    .status > fit-text { margin-top: 1px; }
    .cells { margin-left: auto; display: flex; height: 30px; align-self: flex-end; padding-right: 2px; }
    .cell { width: 39px; border-left: 2px solid #252525; display: flex; align-items: center; justify-content: center; padding-right: 1px; }
    .taskbar { height: 72px; border-top: 2px solid #b5b1bf; display: flex; align-items: center; background: linear-gradient(90deg, #d9dae6 0, #dadae8 60px, #e3d5e6 125px, #efd3de 210px, #f4d3e0 310px, #f4d2e6 375px, #e8d4ea 480px, #e1d5e8 600px, #e3d5e6 850px, #ecd3e6 940px, #ead3e6 1020px, #d9d8ea 1120px, #dcd9e8 1500px, #dcd8e6 1900px, #dbdae6 2200px, #d9d8ec 2350px, #dbdbec); color: #1b1b1b; font: 17px "Open Sans", sans-serif; padding-left: 831px; }
    .pill { width: 327px; height: 47px; margin: 0 4px 0 21px; border-radius: 24px; background: #f7f3f9; border: 1px solid #cfc5d4; border-bottom: 2px solid #bab3c4; display: flex; align-items: center; padding: 0 19px 0 14px; color: #5c5a60; font-size: 18.500px; }
    .pill fit-text { margin-left: 16px; margin-right: auto; }
    .task { width: 66px; height: 70px; display: flex; align-items: center; justify-content: center; position: relative; }
    .task.act::before { content: ""; position: absolute; left: 5px; top: 4px; width: 56px; height: 57px; border-radius: 5px; background: #eeecf4; border: 1px solid #dcd9e4; border-bottom-color: #c5c1ce; }
    .task .ic { position: relative; top: -1px; }
    .mark { position: absolute; left: 29px; bottom: 7px; width: 9px; height: 5px; border-radius: 3px; background: #7b7884; }
    .act .mark { left: 21px; width: 24px; background: #0078d7; }
    .badge { position: absolute; left: 36px; top: 9px; width: 22px; height: 22px; border-radius: 11px; background: #e0195a; border: 2px solid #5d3140; color: #fff; font: 15px/18px "Open Sans", sans-serif; text-align: center; }
    .tray { margin-left: auto; display: flex; align-items: center; padding: 0 31px 4px 0; }
    .clock { display: flex; flex-direction: column; align-items: flex-end; width: 76px; margin: 3px 12px 0 25px; gap: 3px; font-size: 17px; }
  `;

  private hrow(n: Node) {
    return html`<div class=${classMap({ hrow: true, sel: !!n.selected })}>
      <div class="slot ${n.depth ? "d1" : ""}">${n.open ? icon("open", 12, 11) : nothing}</div>
      ${icon("cube", 20, 20, "cube")}${t(n.name, n.w)}
    </div>`;
  }

  private prow(n: Item) {
    if (n.kind === "gap") return html`<div class="pgap"></div>`;
    const top = n.kind === "star" || n.kind === "root";
    const art = n.kind === "star" ? icon("star", 18, 16) : n.kind === "root" ? icon("fopen", 20, 14)
      : n.kind === "find" ? icon("search", 18, 17) : icon("folder", 18, 14);
    return html`<div class=${classMap({ prow: true, sel: !!n.selected })}>
      <div class=${top ? "pa" : "pa deep"}>${top ? icon("open", 12, 11) : n.arrow ? icon("closed", 12, 13) : nothing}</div>
      <div class="pi">${art}</div>${t(n.name, n.w, top ? "b" : "")}
    </div>`;
  }

  private grid() {
    const v = Array.from({ length: 15 }, (_, i) => 59.1 + i * 97.1);
    const h = [89.5, 186.5, 283.5, 380.5, 478.5, 575.5];
    return html`<svg width="1468" height="657" viewBox="0 0 1468 657">
      <defs>
        <linearGradient id="gc"><stop stop-color="#7ccc36"/><stop offset=".5" stop-color="#b2ff5c"/><stop offset="1" stop-color="#7ed23c"/></linearGradient>
        <linearGradient id="rc" x2="0" y2="1"><stop stop-color="#b32a12"/><stop offset=".45" stop-color="#ff4a26"/><stop offset="1" stop-color="#7d1d0c"/></linearGradient>
      </defs>
      ${v.map((x, i) => svg`<path d=${`M${Math.round(x) + 0.5} 0V657`} stroke=${i === 1 || i === 11 ? "#6c6c6c" : "#5a5a5a"}/>`)}
      ${h.map((y) => svg`<path d=${`M0 ${y}H1468`} stroke="#5b5b5b"/>`)}
      <rect x="156.500" y="144.500" width="951" height="431" fill="none" stroke="#b4b4b4" stroke-width="1.200"/>
      <rect x="146.500" y="570.500" width="21" height="9" fill="none" stroke="#b4b4b4"/>
      <text class="txt" x="535" y="194" textLength="130.500">Score: 0</text>
      <text class="txt" x="535" y="547" textLength="116">Time: 0</text>
      <rect x="734.500" y="298.500" width="29" height="29" fill="#3e4360" stroke="#3a62c4"/>
      <path d="M734 328.500H842" stroke="#c04a31" stroke-width="2.600"/>
      <path d="M841 319V338L871 328.500Z" fill="url(#rc)"/>
      <path d="M733.500 329V221" stroke="#92d957" stroke-width="2.600"/>
      <path d="M725 221H743L734 193Z" fill="url(#gc)"/>
    </svg>`;
  }

  render() {
    const tools = ["hand", "move", "rotate", "scale", "rect", "multi"];
    return html`
      <div class="title row">
        ${icon("appdark", 21, 23)}${t("MyFirstProject - SampleScene - Windows, Mac, Linux - Unity 2022.3.7f1* <DX11>", 641, "name")}
        <div class="grow"></div>
        <div class="row win">${icon("min", 16, 16)}${icon("restore", 16, 16)}${icon("close", 16, 16)}</div>
      </div>
      <div class="menu row">${menus.map(([m, w]) => t(m, w))}</div>
      <div class="bar row">
        <div class="tb user">${icon("user", 19, 19)}${t("SB", 23)}${icon("down", 11, 7)}</div>
        <div class="tb cloud">${icon("cloud", 21, 15)}</div>
        <div class="tb dev">${icon("dhex", 20, 20)}</div>
        <div class="row transport">
          <div class="tb">${icon("play", 12, 14)}</div><div class="tb">${icon("pause", 12, 14)}</div><div class="tb off">${icon("step", 15, 14)}</div>
        </div>
        <div class="row tools-r">
          <div class="tb sq">${icon("history", 19, 19)}</div><div class="tb sq">${icon("search", 20, 19)}</div>
          <div class="tb dd">${t("Layers", 56)}${icon("down", 11, 7)}</div><div class="tb dd">${t("Layout", 57)}${icon("down", 11, 7)}</div>
        </div>
      </div>
      <div class="main">
        <div class="left">
          <div class="upper">
            <div class="hier">
              <div class="tabs row">
                <div class="tab on h">${icon("list", 16, 13)}${t("Hierarchy", 84)}</div>
                <div class="tabend">${icon("lock", 13, 15)}${icon("dots", 4, 15)}</div>
              </div>
              <div class="hbar row">${icon("plus", 18, 18)}${icon("down", 10, 6, "d")}
                <div class="field search">${icon("minisd", 14, 11)}${t("All", 19, "ph")}<div class="grow"></div>${icon("expand", 18, 18)}</div>
              </div>
              <div class="tree">
                <div class="hrow scene">
                  ${icon("eyedim", 22, 13)}<span style="width:4px"></span>${icon("handdim", 18, 17)}<span style="width:6px"></span>${icon("open", 12, 11)}<span style="width:8px"></span>${icon("unity", 19, 20)}<span style="width:7px"></span>
                  ${t("SampleScene*", 133, "b")}<div class="grow"></div>${icon("dots", 4, 15)}
                </div>
                ${hierarchy.map((n) => this.hrow(n))}
              </div>
            </div>
            <div class="scene-pane">
              <div class="tabs row">
                <div class="tab on s">${icon("grid", 17, 17)}${t("Scene", 55)}</div>
                <div class="tab g">${icon("pad", 21, 12)}${t("Game", 50)}</div>
                <div class="tabend">${icon("dots", 4, 15)}</div>
              </div>
              <div class="sbar row">
                <div class="grip"></div>
                <div class="btn center">${icon("center", 20, 20)}${t("Center", 57)}${icon("down", 12, 8)}</div>
                <div class="btn local">${icon("local", 21, 21)}${t("Local", 44)}${icon("down", 12, 8)}</div>
                <div class="grip g12"></div>
                <div class="btn on l w33 g10">${icon("gridy", 22, 22)}</div><div class="btn on r">${icon("down", 12, 7)}</div>
                <div class="btn off l w33 g4">${icon("snap", 22, 22)}</div><div class="btn off r">${icon("downdim", 12, 7)}</div>
                <div class="btn w55 g4">${icon("ruler", 20, 20)}${icon("down", 12, 8)}</div>
                <div class="grow"></div>
                <div class="grip"></div>
                <div class="btn w55 g10">${icon("sphere", 21, 21)}${icon("down", 12, 8)}</div>
                <div class="btn on w48 g4 twod">${t("2D", 19)}</div>
                <div class="btn on w48 g4">${icon("bulb", 13, 19)}</div>
                <div class="btn w48 g4">${icon("audio", 17, 16)}</div>
                <div class="btn on l w33 g4">${icon("fx", 19, 18)}</div><div class="btn on r">${icon("down", 12, 7)}</div>
                <div class="btn on w48 g4">${icon("eyeoff", 22, 17)}</div>
                <div class="btn w55 g4">${icon("camera", 19, 14)}${icon("down", 12, 8)}</div>
                <div class="btn on l w33 g4">${icon("gizmo", 22, 22)}</div><div class="btn on r">${icon("down", 12, 7)}</div>
              </div>
              <div class="view">
                ${this.grid()}
                <div class="palette"><div class="handle"></div>
                  ${tools.map((n, i) => html`<div class=${classMap({ btn: true, on: i === 1, first: i === 0, last: i === 5 })}>${icon(n, i === 5 ? 24 : 22, i === 5 ? 24 : 22)}</div>`)}
                </div>
              </div>
            </div>
          </div>
          <div class="project">
            <div class="tabs row">
              <div class="tab on p">${icon("folder", 18, 14)}${t("Project", 62)}</div>
              <div class="tab c">${icon("console", 16, 17)}${t("Console", 71)}</div>
              <div class="tabend">${icon("lock", 13, 15)}${icon("dots", 4, 15)}</div>
            </div>
            <div class="pbar row">${icon("plus", 18, 18)}${icon("down", 11, 7, "d")}
              <div class="field search">${icon("minis", 11, 11)}<div class="grow"></div>${icon("expand", 18, 18)}</div>
              <div class="grow"></div>
              <div class="seg">${icon("shapes", 19, 20)}</div><div class="seg">${icon("tag", 16, 15)}</div><div class="seg">${icon("alert", 20, 20)}</div>
              <div class="seg dim">${icon("star", 18, 17)}</div><div class="seg cnt">${icon("eyeoff", 22, 17)}${t("30", 22)}</div>
            </div>
            <div class="pbody">
              <div class="ptree">${projectTree.map((n) => this.prow(n))}</div>
              <div class="scroll">${icon("up", 11, 7)}<div class="thumb"></div>${icon("down", 11, 7)}</div>
              <div class="content">
                <div class="crumbs row">${t("Assets", 56)}${icon("crumb", 8, 12, "d")}${t("Scripts", 66, "b")}</div>
                <div class="files">
                  ${([["GameCont...", 90], ["PlayerCont...", 91], ["TreasureC...", 87]] as [string, number][]).map(([n, w]) => html`<div class="file">${icon("script", 72, 84)}${t(n, w)}</div>`)}
                </div>
                <div class="foot row"><div class="slider"><div class="knob"></div></div></div>
              </div>
            </div>
          </div>
        </div>
        <div class="insp">
          <div class="tabs row">
            <div class="tab on i">${icon("info", 15, 15)}${t("Inspector", 81)}</div>
            <div class="tabend">${icon("lock", 13, 15)}${icon("dots", 4, 15)}</div>
          </div>
          <div class="head">
            <div class="obj">${icon("bigcube", 30, 31)}${icon("down", 10, 6, "d")}</div>
            <div class="hmain">
              <div class="l1"><div class="field chk">${icon("check", 13, 11)}</div><div class="field nm">${t("GameController", 144, "b")}</div>
                <div class="field chk"></div>${t("Static", 50, "st")}${icon("down", 11, 7)}</div>
              <div class="l2">${t("Tag", 32, "first")}<span style="width:8px"></span><div class="pop" style="width:218px">${t("Untagged", 85)}${icon("down", 11, 7)}</div>
                <span style="width:19px"></span>${t("Layer", 50)}<span style="width:8px"></span><div class="pop" style="width:201px">${t("Default", 64)}${icon("down", 11, 7)}</div></div>
            </div>
          </div>
          <div class="comp row">${icon("open", 12, 11)}<span style="width:10px"></span>${icon("axes", 20, 18)}<span style="width:38px"></span>${t("Transform", 95, "b")}<div class="grow"></div>
            ${icon("help", 15, 15)}<span style="width:16px"></span>${icon("preset", 15, 15)}<span style="width:20px"></span>${icon("dots", 4, 15)}</div>
          <div class="vecs">
            ${([["Position", 69, ["594.4412", 82], ["254.138", 71], ["3.335195", 82]], ["Rotation", 72, ["0", 10], ["0", 10], ["0", 10]], ["Scale", 49, ["1", 8], ["1", 8], ["1", 8]]] as any[]).map(([n, w, ...vals]) => html`
              <div class="vec"><div class="lab">${t(n, w)}</div><div class="lk">${n === "Scale" ? icon("unlink", 19, 15) : nothing}</div>
                ${vals.map((v: [string, number], i: number) => html`<div class="ax">${"XYZ"[i]}</div><div class="field num">${t(v[0], v[1])}</div>`)}</div>`)}
          </div>
          <div class="add">${t("Add Component", 140)}</div>
        </div>
      </div>
      <div class="status row">${icon("error", 20, 20)}${t("Assets\\Scripts\\TreasureControllerScript.cs(26,9): error CS0103: The name 'p' does not exist in the current context", 982)}
        <div class="cells">${["bug", "stack", "lightoff", "okring"].map((n) => html`<div class="cell">${icon(n, 21, 21)}</div>`)}</div>
      </div>
      <div class="taskbar">
        ${icon("windows", 35, 35)}
        <div class="pill">${icon("find", 22, 22)}${t("Search", 61)}${icon("fruit", 46, 35)}</div>
        ${["explorer", "firefox", "edge", "mask", "notepad", "applight", "appactive", "slack"].map((n, i) => html`
          <div class=${classMap({ task: true, act: i === 6 })}>${icon(n, 36, 35)}${[1, 4, 5, 6, 7].includes(i) ? html`<div class="mark"></div>` : nothing}${i === 7 ? html`<div class="badge">1</div>` : nothing}</div>`)}
        <div class="tray">
          ${icon("caret", 16, 9)}<span style="width:28px"></span>${icon("wifi", 24, 17)}<span style="width:12px"></span>${icon("mute", 24, 17)}<span style="width:12px"></span>${icon("battery", 25, 20)}
          <div class="clock">${t("10:32 AM", 76)}${t("7/9/2024", 73)}</div>
          ${icon("bell", 21, 23)}
        </div>
      </div>`;
  }
}
